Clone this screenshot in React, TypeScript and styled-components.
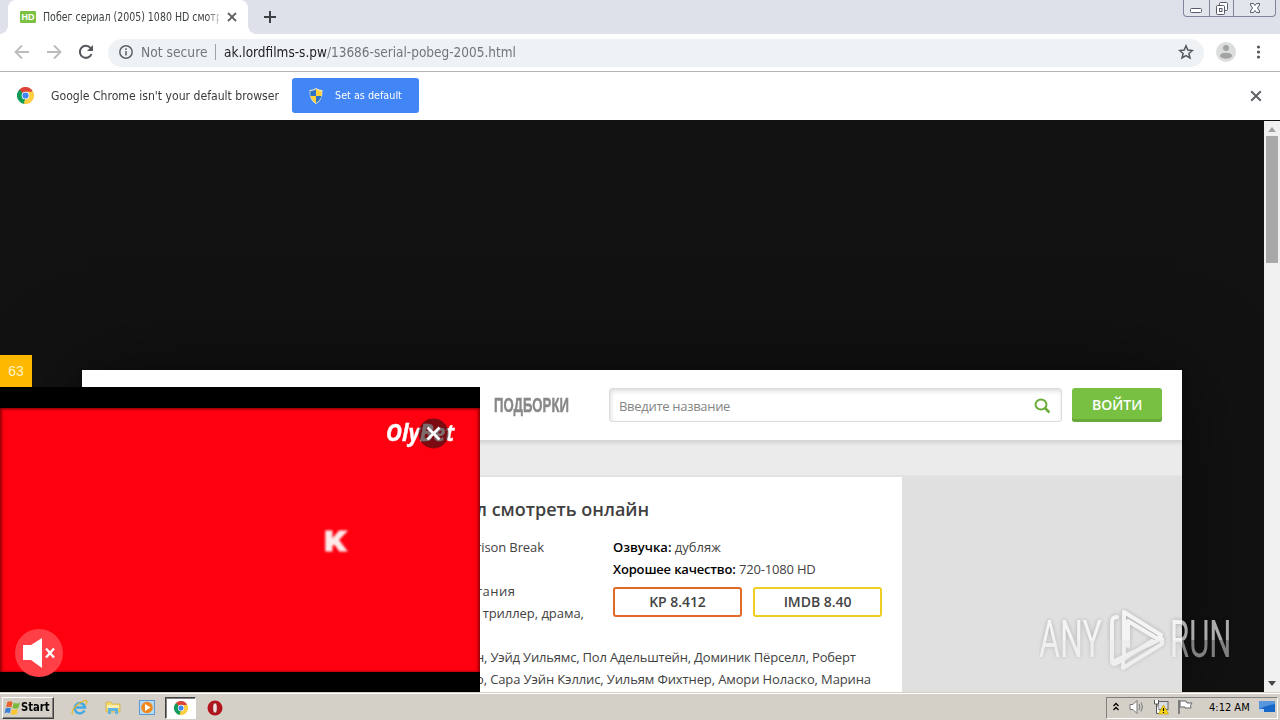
import React from 'react';
import styled, { createGlobalStyle } from 'styled-components';

const Global = createGlobalStyle`
  * { box-sizing: border-box; }
  body { margin: 0; overflow: hidden; background: #111; }
  svg { display: block; flex: none; }
`;

const ui = '"DejaVu Sans Condensed", "DejaVu Sans", sans-serif';

const Screen = styled.div`
  width: 1280px; height: 720px; display: flex; flex-direction: column;
  position: relative; overflow: hidden; font-family: ${ui};
`;

/* Text whose glyphs are narrowed or widened horizontally inside a fixed slot */
const Fit = styled.span<{ $w: number; $sx?: number; $ls?: number }>`
  display: block; flex: none; width: ${p => p.$w}px; white-space: nowrap;
  transform: scaleX(${p => p.$sx ?? 1}); transform-origin: 0 50%;
  letter-spacing: ${p => p.$ls ?? 0}px;
`;

/* ---------- Browser chrome ---------- */
const TabStrip = styled.div`
  height: 34px; flex: none; background: #dee1e9; display: flex; align-items: flex-start; padding-left: 8px;
`;
const Tab = styled.div`
  width: 240px; height: 34px; background: #fff; border-radius: 8px 8px 0 0; position: relative;
  display: flex; align-items: center; padding: 0 0 0 12px; font-size: 12px; color: #3c4043;
  &::before, &::after { content: ''; position: absolute; bottom: 0; width: 8px; height: 8px; }
  &::before { left: -8px; background: radial-gradient(circle at 0 0, transparent 7.5px, #fff 8px); }
  &::after { right: -8px; background: radial-gradient(circle at 100% 0, transparent 7.5px, #fff 8px); }
`;
const HdBadge = styled.div`
  width: 16px; height: 12px; background: #7cc242; color: #fff; border-radius: 1px; margin-right: 7px;
  font: bold 9px/12px "Liberation Sans", sans-serif; text-align: center;
`;
const TabTitle = styled.div`
  width: 176px; white-space: nowrap; margin-right: 8px;
  mask-image: linear-gradient(to right, #000 164px, rgba(0,0,0,.25) 176px);
`;
const NewTab = styled.div`padding: 11px 0 0 16px;`;
const WindowButtons = styled.div`
  margin-left: auto; margin-right: 4px; width: 93px; height: 17px; display: flex;
  border: 1px solid #80869a; border-top: 0; border-radius: 0 0 4px 4px; background: #e2e5ec;
`;
const WindowButton = styled.div<{ $w: number }>`
  width: ${p => p.$w}px; display: flex; justify-content: center;
  & + & { border-left: 1px solid #80869a; }
`;
const Toolbar = styled.div`
  height: 38px; flex: none; background: #fff; border-bottom: 1px solid #b3b4b3; display: flex; align-items: center; padding-left: 14px;
`;
const NavIcons = styled.div`display: flex; gap: 16px; width: 94px; padding-bottom: 1px;`;
const Omnibox = styled.div`
  width: 1096px; height: 28px; border-radius: 14px; background: #eff2f5; display: flex; align-items: center;
  padding: 0 10px 2px; font-size: 14px; color: #72767a;
`;
const Host = styled.span`color: #202124;`;
const Divider = styled.div`width: 1px; height: 16px; background: #9ea2a8; margin: 0 8px 0 7px;`;
const StarSlot = styled.div`margin-left: auto;`;
const ToolbarEnd = styled.div`display: flex; align-items: center; margin-left: 12px; gap: 20px; padding-bottom: 1px;`;
const InfoBar = styled.div`
  height: 49px; flex: none; background: #fff; border-bottom: 1px solid #111; display: flex; align-items: center;
  padding: 0 18px 1px 17px; font-size: 12.5px; color: #3a3a3a;
`;
const DefaultButton = styled.div`
  width: 127px; height: 35px; border-radius: 3px; background: #4285f4; color: #fff; display: flex; align-items: center;
  padding-left: 17px; gap: 12px; font-size: 11px; margin-left: 13px;
`;
const BarClose = styled.div`margin-left: auto;`;

/* ---------- Web page ---------- */
const Viewport = styled.div`height: 571px; flex: none; display: flex; position: relative; overflow: hidden; background: #121212;`;
const Page = styled.div`width: 1264px; height: 571px; overflow: hidden; padding: 249px 82px 0; font-family: "Open Sans", sans-serif;`;
const Site = styled.div`width: 1100px; height: 330px; background: #e0e0e0; box-shadow: 0 0 80px rgba(0,0,0,.5);`;
const SiteHeader = styled.div`
  height: 70px; background: #fff; display: flex; padding: 18px 20px 0 412px; position: relative;
  box-shadow: 0 2px 5px rgba(0,0,0,.14);
`;
const MenuItem = styled.div`
  width: 115px; padding-top: 1px; font: bold 19.5px/33px "Liberation Sans Narrow", "Liberation Sans", sans-serif; color: #888;
  -webkit-text-stroke: .4px #888;
`;
const Search = styled.div`
  width: 453px; height: 34px; border: 1px solid #dcdcdc; border-radius: 3px; display: flex; align-items: center;
  justify-content: space-between; padding: 2px 11px 0 9px; color: #858585; font-size: 13px;
  box-shadow: inset 1px 2px 4px rgba(0,0,0,.14);
`;
const Login = styled.div`
  width: 90px; height: 34px; margin-left: 10px; background: #78c042; border-radius: 3px; color: #fff;
  box-shadow: inset 0 -3px 0 #69a83a; font: 600 14px/33px "Open Sans", sans-serif; padding-left: 20px;
`;
const SubBar = styled.div`height: 37px; background: #ebebeb; border-bottom: 2px solid #e3e3e3;`;
const Article = styled.div`
  width: 820px; height: 230px; background: #fff; padding: 19px 0 0 394px; font-size: 13px; line-height: 22px; color: #424242;
  white-space: nowrap;
`;
const Title = styled.div`font-size: 18px; line-height: 26px; font-weight: 600; margin-bottom: 14px; color: #404040;`;
const Columns = styled.div`display: flex; height: 110px;`;
const Left = styled.div`width: 137px;`;
const Line = styled.div<{ $ls?: number }>`height: 22px; letter-spacing: ${p => p.$ls ?? 0}px;`;
const Strong = styled.b`color: #000; font-weight: 600;`;
const Ratings = styled.div`display: flex; gap: 11px; margin-top: 7px;`;
const Rating = styled.div<{ $c: string }>`
  width: 129px; height: 30px; border: 2px solid ${p => p.$c}; border-radius: 3px; text-align: center;
  font-size: 14px; line-height: 26px; font-weight: 600; color: #444; letter-spacing: -.05px;
`;
const Scrollbar = styled.div`
  width: 16px; background: #f0f0f0; display: flex; flex-direction: column; align-items: center; padding: 6px 0 6px;
`;
const Thumb = styled.div`width: 12px; height: 127px; background: #a8a8a8; margin-top: 4px; margin-bottom: auto;`;

/* ---------- Floating advertisement ---------- */
const Ad = styled.div`position: absolute; left: 0; top: 234px; width: 480px; height: 337px;`;
const Counter = styled.div`
  width: 32px; height: 32px; background: #ffb800; color: #fff3c8; font: 14px/32px "Liberation Sans", sans-serif; text-align: center;
`;
const Video = styled.div`height: 305px; background: #000; padding-top: 21px; position: relative;`;
const Frame = styled.div`height: 264px; background: #ff0010; box-shadow: inset 2px 1px 3px rgba(80,0,0,.6), inset -2px 0 3px rgba(80,0,0,.6);`;
const Brand = styled.div`
  position: absolute; left: 386px; top: 30px; color: #fff; font: italic 700 23px/30px "Open Sans", sans-serif;
  -webkit-text-stroke: .4px #fff;
`;
const AdClose = styled.div`position: absolute; left: 418px; top: 31px;`;
const Letter = styled.div`
  position: absolute; left: 324px; top: 140px; color: #ffe9e9; font: 900 27px/30px "Roboto", sans-serif; filter: blur(1px);
  -webkit-text-stroke: .8px #ffe9e9;
`;
const Mute = styled.div`position: absolute; left: 15px; top: 242px;`;

/* ---------- Taskbar ---------- */
const Taskbar = styled.div`
  height: 28px; flex: none; background: #d4d0c8; box-shadow: inset 0 1px 0 #d4d0c8, inset 0 2px 0 #fff;
  display: flex; align-items: center; padding: 3px 2px 0; color: #000;
`;
const Start = styled.div`
  width: 52px; height: 22px; border: 1px solid; border-color: #fff #404040 #404040 #fff; box-shadow: inset -1px -1px 0 #808080;
  display: flex; align-items: center; padding: 0 0 1px 1px; gap: 0; font-weight: bold; font-size: 12px;
`;
const Quick = styled.div`display: flex; align-items: center; margin-left: 17px;`;
const QuickItem = styled.div<{ $w: number; $on?: boolean }>`
  width: ${p => p.$w}px; height: 22px; display: flex; align-items: center; justify-content: center;
  ${p => p.$on && 'background:#fff;border:1px solid;border-color:#404040 #fff #fff #404040;box-shadow:inset 1px 1px 0 #808080;'}
`;
const Tray = styled.div`
  margin-left: auto; width: 172px; height: 22px; border: 1px solid; border-color: #808080 #fff #fff #808080;
  display: flex; align-items: center; padding: 0 0 1px 6px; font-size: 11px;
`;
const Slot = styled.div<{ $w: number }>`width: ${p => p.$w}px; flex: none;`;

const Watermark = styled.div`
  position: absolute; left: 1039px; top: 608px; height: 64px; display: flex; align-items: center; opacity: .65;
  color: #fff; font: 400 51px/64px "Roboto", sans-serif; filter: drop-shadow(0 0 2px rgba(0,0,0,.35));
  mask-image: linear-gradient(#000 50%, rgba(0,0,0,.72) 50%);
`;

const Cross = ({ s, c, w = 2 }: { s: number; c: string; w?: number }) => (
  <svg width={s} height={s} viewBox="0 0 10 10"><path d="M1 1 9 9M9 1 1 9" stroke={c} strokeWidth={w} /></svg>
);

const ChromeLogo = ({ s }: { s: number }) => (
  <svg width={s} height={s} viewBox="0 0 18 18">
    <path d="M9 9 1.2 4.5A9 9 0 0 1 16.8 4.5Z" fill="#db4437" />
    <path d="M9 9 16.8 4.5A9 9 0 0 1 9 18Z" fill="#ffcd40" />
    <path d="M9 9V18A9 9 0 0 1 1.2 4.5Z" fill="#0f9d58" />
    <path d="M9 5H17Q18 9 16.5 13L12.4 11Z" fill="#ffcd40" />
    <path d="M12.5 11 9 18 7 17.5 9 12Z" fill="#ffcd40" />
    <path d="M5.4 11 1.2 4.5 3 3 7 8Z" fill="#0f9d58" />
    <circle cx="9" cy="9" r="4.1" fill="#fff" /><circle cx="9" cy="9" r="3.3" fill="#4285f4" />
  </svg>
);

export default function App() {
  return (
    <Screen>
      <Global />
      <TabStrip>
        <Tab>
          <HdBadge>HD</HdBadge>
          <TabTitle><Fit $w={176} $sx={0.875}>Побег сериал (2005) 1080 HD смотр</Fit></TabTitle>
          <Cross s={10} c="#5f6368" w={1.8} />
        </Tab>
        <NewTab>
          <svg width="12" height="12" viewBox="0 0 12 12"><path d="M6 0V12M0 6H12" stroke="#3c4043" strokeWidth="2" /></svg>
        </NewTab>
        <WindowButtons>
          <WindowButton $w={25}>
            <svg width="14" height="16"><rect x="1.5" y="8.5" width="11" height="4" rx="1" fill="#fff" stroke="#555b6b" /></svg>
          </WindowButton>
          <WindowButton $w={25}>
            <svg width="14" height="16" fill="#fff" stroke="#555b6b"><rect x="4.5" y="2.5" width="8" height="8" rx="1" /><rect x="1.5" y="5.5" width="8" height="9" rx="1" /><rect x="4.5" y="8.5" width="2.5" height="3" /></svg>
          </WindowButton>
          <WindowButton $w={42}>
            <svg width="14" height="16" viewBox="0 0 14 16"><path d="M2.5 3.5H5.5L7 5.5 8.5 3.5H11.5V5L9.5 8 11.5 11V12.5H8.5L7 10.5 5.5 12.5H2.5V11L4.5 8 2.5 5Z" fill="#fff" stroke="#555b6b" /></svg>
          </WindowButton>
        </WindowButtons>
      </TabStrip>

      <Toolbar>
        <NavIcons>
          <svg width="16" height="16" fill="none" stroke="#babcbe" strokeWidth="1.8"><path d="M15 8H2M8 1.5 1.5 8 8 14.5" /></svg>
          <svg width="16" height="16" fill="none" stroke="#babcbe" strokeWidth="1.8"><path d="M1 8H14M8 1.5 14.5 8 8 14.5" /></svg>
          <svg width="16" height="16" fill="none" stroke="#54575b" strokeWidth="2"><path d="M13.5 10A6 6 0 1 1 12.5 4" /><path d="M15 1V7H9Z" fill="#54575b" stroke="none" /></svg>
        </NavIcons>
        <Omnibox>
          <Slot $w={23}>
            <svg width="16" height="16" fill="none" stroke="#5f6368" strokeWidth="1.5"><circle cx="8" cy="8" r="6.2" /><path d="M8 7V11.5M8 4.3V5.9" /></svg>
          </Slot>
          <Fit $w={67} $sx={0.98}>Not secure</Fit>
          <Divider />
          <Fit $w={292} $sx={0.963}><Host>ak.lordfilms-s.pw</Host>/13686-serial-pobeg-2005.html</Fit>
          <StarSlot>
            <svg width="16" height="16" viewBox="0 0 16 16"><path d="M8 1.8 9.8 6.1 14.4 6.5 10.9 9.5 12 14 8 11.6 4 14 5.1 9.5 1.6 6.5 6.2 6.1Z" fill="none" stroke="#54575b" strokeWidth="1.5" /></svg>
          </StarSlot>
        </Omnibox>
        <ToolbarEnd>
          <svg width="20" height="20"><circle cx="10" cy="10" r="10" fill="#dcdddd" /><circle cx="10" cy="6" r="3" fill="#a2a3a4" /><ellipse cx="10" cy="13.7" rx="6" ry="3" fill="#a2a3a4" /></svg>
          <svg width="6" height="16" fill="#54575b"><circle cx="2.5" cy="3" r="1.6" /><circle cx="2.5" cy="8" r="1.6" /><circle cx="2.5" cy="13" r="1.6" /></svg>
        </ToolbarEnd>
      </Toolbar>

      <InfoBar>
        <Slot $w={34}><ChromeLogo s={17} /></Slot>
        <Fit $w={228} $sx={0.97}>Google Chrome isn't your default browser</Fit>
        <DefaultButton>
          <svg width="14" height="16" viewBox="0 0 14 16"><path d="M7 0Q10 2 13.5 2Q14 12 7 16Q0 12 .5 2Q4 2 7 0Z" fill="#e9e4c4" /><path d="M7 1.2V8H1.5Q1 5 1.5 3Q5 3 7 1.2Z" fill="#2d73c8" /><path d="M7 1.2Q9 3 12.5 3 13 5 12.5 8H7Z" fill="#ffd23c" /><path d="M1.5 8H7V15Q2.5 12 1.5 8Z" fill="#ffd23c" /><path d="M7 8H12.5Q11.5 12 7 15Z" fill="#2d73c8" /></svg>
          <Fit $w={67} $sx={0.975}>Set as default</Fit>
        </DefaultButton>
        <BarClose><Cross s={12} c="#5f6368" w={1.7} /></BarClose>
      </InfoBar>

      <Viewport>
        <Page>
          <Site>
            <SiteHeader>
              <MenuItem><Fit $w={75} $sx={0.675}>ПОДБОРКИ</Fit></MenuItem>
              <Search>
                <Fit $w={112} $ls={-0.3}>Введите название</Fit>
                <svg width="16" height="16" fill="none" stroke="#69ae39"><ellipse cx="7" cy="6.5" rx="5.5" ry="5" strokeWidth="2" /><path d="M11 10 15.5 14.5" strokeWidth="2.6" /></svg>
              </Search>
              <Login>ВОЙТИ</Login>
            </SiteHeader>
            <SubBar />
            <Article>
              <Title>л смотреть онлайн</Title>
              <Columns>
                <Left>
                  <Line $ls={-0.1}>rison Break</Line><Line /><Line $ls={0.5}>тания</Line><Line $ls={-0.05}>, триллер, драма,</Line>
                </Left>
                <div>
                  <Line><Strong>Озвучка:</Strong> дубляж</Line>
                  <Line $ls={-0.17}><Strong>Хорошее качество:</Strong> 720-1080 HD</Line>
                  <Ratings>
                    <Rating $c="#e06a26">KP 8.412</Rating>
                    <Rating $c="#f0cd20">IMDB 8.40</Rating>
                  </Ratings>
                </div>
              </Columns>
              <Line $ls={-0.18}>н, Уэйд Уильямс, Пол Адельштейн, Доминик Пёрселл, Роберт</Line>
              <Line $ls={-0.12}>о, Сара Уэйн Кэллис, Уильям Фихтнер, Амори Ноласко, Марина</Line>
            </Article>
          </Site>
        </Page>
        <Scrollbar>
          <svg width="8" height="5"><path d="M0 5 4 0 8 5Z" fill="#a0a0a0" /></svg>
          <Thumb />
          <svg width="8" height="5"><path d="M0 0H8L4 5Z" fill="#484848" /></svg>
        </Scrollbar>

        <Ad>
          <Counter>63</Counter>
          <Video>
            <Frame />
            <Brand><Fit $w={70} $sx={0.95}>OlyBet</Fit></Brand>
            <AdClose>
              <svg width="31" height="31"><circle cx="15.5" cy="15.5" r="15" fill="#2b1012" fillOpacity=".62" /><path d="M9.5 9.5 21.5 21.5M21.5 9.5 9.5 21.5" stroke="#fff" strokeWidth="2.8" /></svg>
            </AdClose>
            <Letter><Fit $w={24} $sx={1.3}>K</Fit></Letter>
            <Mute>
              <svg width="48" height="48"><circle cx="24" cy="24" r="24" fill="#ff4047" /><path d="M8 16H16L27 9V39L16 31H8Z" fill="#fff" /><path d="M31 19.5 39 28.5M39 19.5 31 28.5" stroke="#fff" strokeWidth="2.3" /></svg>
            </Mute>
          </Video>
        </Ad>
      </Viewport>

      <Taskbar>
        <Start>
          <svg width="17" height="17" viewBox="0 0 16 16"><path d="M3 3Q6 1 8 3L7 8Q4 6.5 2 8Z" fill="#e8642c" /><path d="M9 3.5Q12 5 15 3.5L13.5 8.5Q11 10 8 8.5Z" fill="#79b93c" /><path d="M1.5 9Q4 7.5 6.5 9L5.5 13.5Q3 12 .5 13.5Z" fill="#3d82d6" /><path d="M7.5 9.5Q10 11 13 9.5L12 14Q9 15.5 6.5 14Z" fill="#fbc62f" /></svg>
          <Fit $w={30} $sx={0.93}>Start</Fit>
        </Start>
        <Quick>
          <QuickItem $w={17}>
            <svg width="17" height="17" viewBox="0 0 17 17" fill="none"><path d="M13.5 11.5A5.2 5.2 0 1 1 14 8.5H5" stroke="#41a8e2" strokeWidth="2.4" /><path d="M2 15Q-1 13 6 6 14 0 15.5 2 16.5 3 14.5 6" stroke="#e6b830" strokeWidth="1.3" /></svg>
          </QuickItem>
          <QuickItem $w={50}>
            <svg width="17" height="17"><path d="M1 3H6L7.5 5H15V13H1Z" fill="#f2d76c" stroke="#d5b441" strokeWidth=".8" /><path d="M2 6H14V9H2Z" fill="#fbf0b0" /><path d="M3 15V9H13V15H10V12H6V15Z" fill="#60b3e3" /></svg>
          </QuickItem>
          <QuickItem $w={18}>
            <svg width="16" height="17"><rect x=".5" y="1.5" width="15" height="14" fill="#b9d9f3" stroke="#5a9bd5" /><circle cx="8" cy="8.5" r="5.8" fill="#f08a1c" /><path d="M6 5 11.5 8.5 6 12Z" fill="#fff" /></svg>
          </QuickItem>
          <Slot $w={9} />
          <QuickItem $w={31} $on><ChromeLogo s={14} /></QuickItem>
          <Slot $w={10} />
          <QuickItem $w={17}>
            <svg width="16" height="16"><circle cx="8" cy="8" r="7.5" fill="#b3131a" /><ellipse cx="8" cy="8" rx="2.3" ry="5.2" fill="#f5dede" stroke="#7b0b10" strokeWidth=".8" /></svg>
          </QuickItem>
        </Quick>
        <Tray>
          <Slot $w={16}><svg width="6" height="10" fill="none" stroke="#000" strokeWidth="1.3"><path d="M.5 4 3 1.5 5.5 4M.5 8 3 5.5 5.5 8" /></svg></Slot>
          <Slot $w={24}><svg width="17" height="16" fill="none" stroke="#777"><path d="M1 5.5H4L8 1.5V14.5L4 10.5H1Z" fill="#fff" /><path d="M10 5Q12 8 10 11M12 3.500Q15 8 12 12.500" /></svg></Slot>
          <Slot $w={24}><svg width="17" height="16"><rect x="5" y="2.5" width="10" height="8" fill="#d9dde2" stroke="#666" /><path d="M1.5 1V5H5.5V1M3.5 5V14.5H7" fill="#fff" stroke="#555" /><path d="M10.5 6 15.5 15H5.5Z" fill="#ffd814" stroke="#b89200" strokeWidth=".6" /><path d="M10.5 9V12M10.5 13V14" stroke="#000" strokeWidth="1.2" /></svg></Slot>
          <Slot $w={32}><svg width="17" height="16"><path d="M2 1V15" stroke="#666" strokeWidth="1.5" /><path d="M3 2H9L10 4H15L13.5 6.5 14 9H8V8H3Z" fill="#fff" stroke="#666" /></svg></Slot>
          <Fit $w={50} $sx={1}>4:12 AM</Fit>
          <svg width="16" height="14"><rect x="0" y="1" width="16" height="11" fill="#1767c8" /><path d="M0 1H16V4Q8 5 0 9Z" fill="#5795dc" /><path d="M0 9H5V12H0Z" fill="#b8d0eb" /></svg>
        </Tray>
      </Taskbar>

      <Watermark>
        <Fit $w={70} $sx={0.63}>ANY</Fit>
        <svg width="56" height="64" fill="none" stroke="#fff" strokeWidth="4" strokeLinejoin="round" strokeLinecap="round">
          <path d="M15 46V4L52 27 49 31 19 13V38" /><path d="M8 9Q3 9 3 14V54L52 31M3 54Q4 58 8 55L43 33" /><path d="M14 52V60L53 36V31" />
        </svg>
        <Slot $w={5} />
        <Fit $w={62} $sx={0.61}>RUN</Fit>
      </Watermark>
    </Screen>
  );
}
